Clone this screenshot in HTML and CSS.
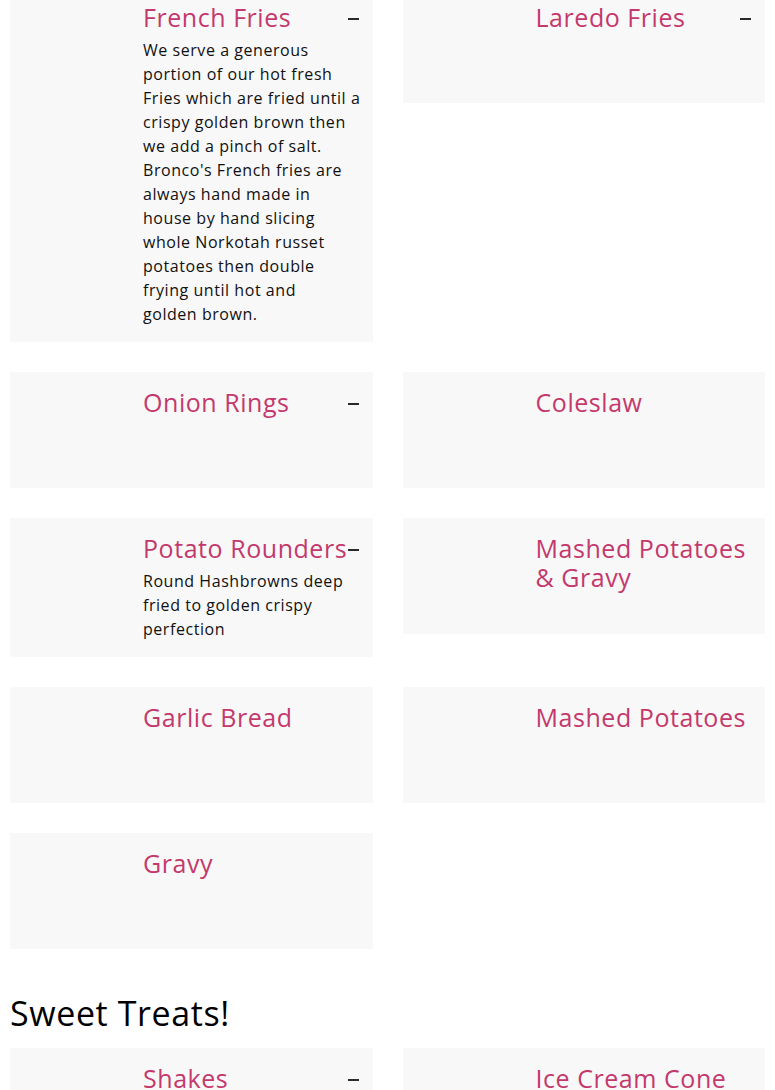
FILE: index.html
```html
<!DOCTYPE html>
<html lang="en">
<head>
<meta charset="utf-8">
<title>Menu</title>
<link rel="stylesheet" href="styles.css">
</head>
<body>
<main class="page">
  <section class="grid first">
    <article class="card">
      <div class="card-head"><h3 class="title">French Fries</h3><span class="toggle" aria-label="collapse"></span></div>
      <p class="desc">We serve a generous portion of our hot fresh Fries which are fried until a crispy golden brown then we add a pinch of salt. Bronco's French fries are always hand made in house by hand slicing whole Norkotah russet potatoes then double frying until hot and golden&nbsp;brown.</p>
    </article>
    <article class="card">
      <div class="card-head"><h3 class="title">Laredo Fries</h3><span class="toggle" aria-label="collapse"></span></div>
    </article>
    <article class="card">
      <div class="card-head"><h3 class="title">Onion Rings</h3><span class="toggle" aria-label="collapse"></span></div>
    </article>
    <article class="card">
      <div class="card-head"><h3 class="title">Coleslaw</h3></div>
    </article>
    <article class="card">
      <div class="card-head"><h3 class="title">Potato Rounders</h3><span class="toggle" aria-label="collapse"></span></div>
      <p class="desc">Round Hashbrowns deep fried to golden crispy perfection</p>
    </article>
    <article class="card">
      <div class="card-head"><h3 class="title">Mashed Potatoes &amp; Gravy</h3></div>
    </article>
    <article class="card">
      <div class="card-head"><h3 class="title">Garlic Bread</h3></div>
    </article>
    <article class="card">
      <div class="card-head"><h3 class="title">Mashed Potatoes</h3></div>
    </article>
    <article class="card">
      <div class="card-head"><h3 class="title">Gravy</h3></div>
    </article>
  </section>

  <h2 class="section-title">Sweet Treats!</h2>

  <section class="grid">
    <article class="card">
      <div class="card-head"><h3 class="title">Shakes</h3><span class="toggle" aria-label="collapse"></span></div>
    </article>
    <article class="card">
      <div class="card-head"><h3 class="title">Ice Cream Cone</h3></div>
    </article>
  </section>
</main>
</body>
</html>
```

FILE: styles.css
```css
* { box-sizing: border-box; }

html, body {
  margin: 0;
  padding: 0;
  background: #ffffff;
}

body {
  font-family: "Open Sans", "DejaVu Sans", sans-serif;
  color: #111111;
}

.page {
  padding: 0 10px;
}

.grid {
  display: grid;
  grid-template-columns: 1fr 1fr;
  column-gap: 30px;
  row-gap: 30px;
  align-items: start;
}

.grid.first {
  margin-top: -13px;
}

.card {
  background: #f8f8f8;
  min-height: 116px;
  padding: 16px 12px 16px 133px;
}

.card-head {
  display: flex;
  justify-content: space-between;
  align-items: flex-start;
}

.title {
  margin: 0;
  font-size: 25px;
  line-height: 29px;
  font-weight: 400;
  color: #c4396c;
  letter-spacing: 0.55px;
}

.toggle {
  flex: none;
  width: 11px;
  height: 2px;
  margin-top: 15px;
  margin-right: 2px;
  background: #2a2a2a;
}

.desc {
  margin: 6px 0 0;
  font-size: 16px;
  line-height: 24px;
  color: #111111;
  letter-spacing: 0.55px;
}

.section-title {
  margin: 45px 0 16px;
  font-size: 34px;
  line-height: 38px;
  font-weight: 400;
  color: #000000;
  letter-spacing: 0.6px;
}
```
